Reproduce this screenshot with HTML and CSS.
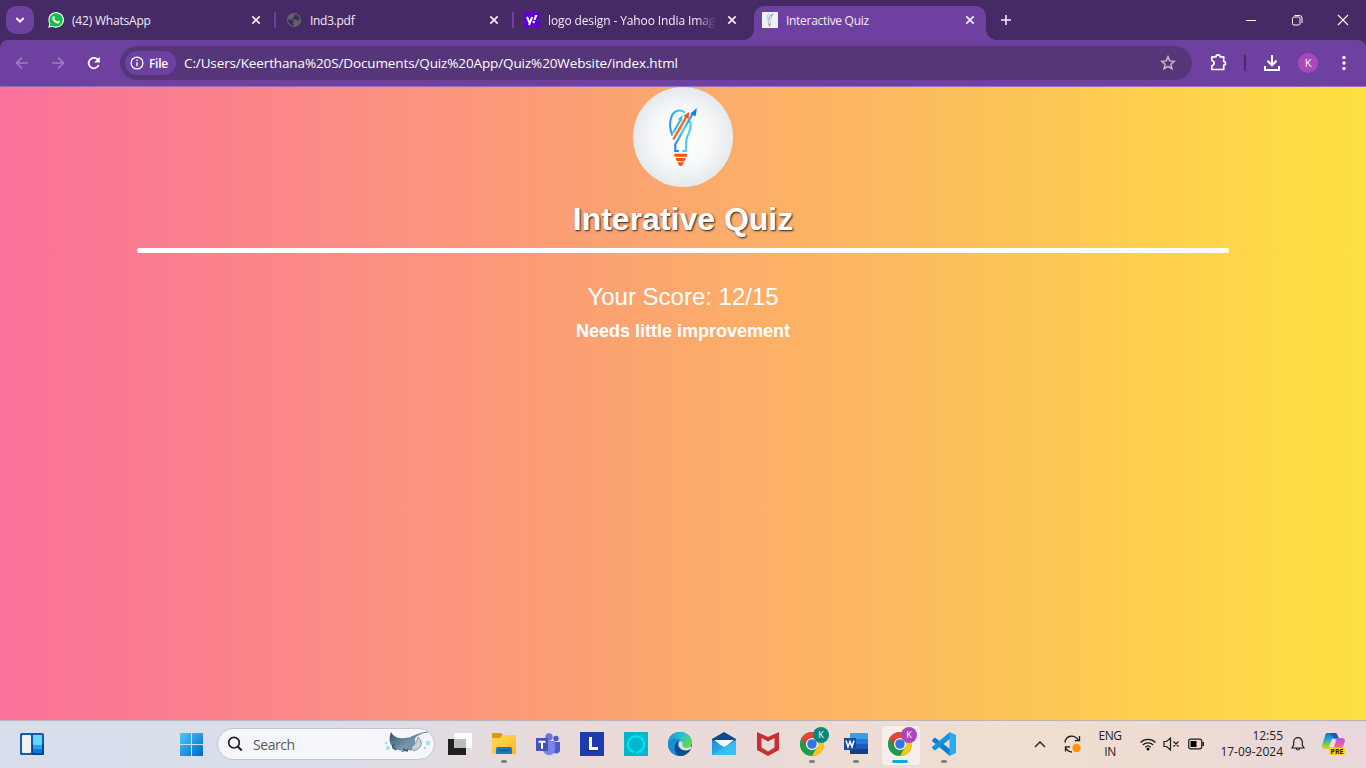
FILE: index.html
```html
<!DOCTYPE html>
<html lang="en">
<head>
<meta charset="utf-8">
<title>Interactive Quiz</title>
<link rel="stylesheet" href="styles.css">
</head>
<body>
<svg width="0" height="0" class="defs">
  <defs>
    <linearGradient id="gStart" x1="0" y1="0" x2="1" y2="1"><stop offset="0" stop-color="#4cc8f8"/><stop offset="1" stop-color="#0067c8"/></linearGradient>
    <linearGradient id="gFolder" x1="0" y1="0" x2="1" y2="1"><stop offset="0" stop-color="#ffdc60"/><stop offset="1" stop-color="#fbb812"/></linearGradient>
    <linearGradient id="gEdge" x1="0" y1="0" x2="1" y2=".5"><stop offset="0" stop-color="#1590d4"/><stop offset=".55" stop-color="#2bc0d0"/><stop offset="1" stop-color="#62db52"/></linearGradient>
    <linearGradient id="gMail" x1="0" y1="0" x2="1" y2="1"><stop offset="0" stop-color="#1b8ee0"/><stop offset="1" stop-color="#30c4f4"/></linearGradient>
    <linearGradient id="gRay" x1="0" y1="0" x2="1" y2="1"><stop offset="0" stop-color="#34506b"/><stop offset=".6" stop-color="#7898ab"/><stop offset="1" stop-color="#52708a"/></linearGradient>
    <linearGradient id="gCopA" x1="0" y1="0" x2="0" y2="1"><stop offset="0" stop-color="#1769df"/><stop offset=".4" stop-color="#20a9c9"/><stop offset=".7" stop-color="#84c94c"/><stop offset="1" stop-color="#f4c624"/></linearGradient>
    <linearGradient id="gCopB" x1="0" y1="0" x2="0" y2="1"><stop offset="0" stop-color="#a064e8"/><stop offset=".5" stop-color="#e55cae"/><stop offset="1" stop-color="#ff8b49"/></linearGradient>
    <linearGradient id="gBulb" x1="0" y1="0" x2="1" y2="0"><stop offset="0" stop-color="#2e96fb"/><stop offset="1" stop-color="#4cd9f8"/></linearGradient>
    <linearGradient id="gRod" gradientUnits="userSpaceOnUse" x1="42" y1="58" x2="62" y2="24"><stop offset="0" stop-color="#2588fa"/><stop offset=".45" stop-color="#48ccfa"/><stop offset="1" stop-color="#1c77ef"/></linearGradient>
    <radialGradient id="gDisc"><stop offset="0" stop-color="#fff"/><stop offset=".55" stop-color="#f8f9fa"/><stop offset="1" stop-color="#e5eaed"/></radialGradient>
    <symbol id="x" viewBox="0 0 16 16"><path d="M4.3 4.3l7.4 7.4M11.700 4.300l-7.400 7.400" stroke="#f2edf8" stroke-width="1.700" fill="none"/></symbol>
    <symbol id="bulb" viewBox="0 0 100 100">
      <g fill="none">
        <path d="M52 25.500c-5-4-11-2-13.500 4-2.500 7-1.500 13 .8 19" stroke="url(#gBulb)" stroke-width="2"/>
        <path d="M57.200 34c1.500 7-.5 11-2.700 15-1.800 4-1.500 8-1.500 15h-3.700" stroke="#45cffa" stroke-width="2.200"/>
        <path d="M45.800 64h-3.500v-6.500L60 26" stroke="url(#gRod)" stroke-width="2.200"/>
        <path d="M40 46l7.500-13" stroke="#3cb3f8" stroke-width="2.200"/>
        <path d="M40.300 52.500L53.500 29.500" stroke="#ff661c" stroke-width="2.500"/>
      </g>
      <path d="M44.800 32l4.900-3.700-.8 6z" fill="#3ab8f5"/>
      <path d="M50.500 29l5.800-4-.8 7z" fill="#f4570b"/>
      <path d="M57.500 26.500l6.500-5.500-1.500 8.500z" fill="#1c77ef"/>
      <path d="M41.300 66.700H54v3H41.300zM42.500 71h10.300l-1.300 3.200h-7.700zM44.300 75.300h6.700l-1.700 3-1.700 1-1.700-1z" fill="#fa5310"/>
    </symbol>
    <symbol id="chrome" viewBox="0 0 24 24">
      <circle cx="12" cy="12" r="12" fill="#229b49"/>
      <path d="M12 12L1.600 6A12 12 0 0 1 22.400 6z" fill="#ea4435"/>
      <path d="M12 6h10.400A12 12 0 0 1 12 24l5.200-9z" fill="#fcc31d"/>
      <path d="M1.600 6l5.200 9L12 12V6z" fill="#e23d30"/>
      <path d="M1.600 6l5.200 9 5.200 3-3.300 5.500A12 12 0 0 1 1.600 6z" fill="#229b49"/>
      <circle cx="12" cy="12" r="6" fill="#fff"/><circle cx="12" cy="12" r="4.800" fill="#3275eb"/>
    </symbol>
  </defs>
</svg>

<div class="screen">
  <header class="tabstrip">
    <div class="tabsearch"><svg width="28" height="28"><path d="M10.300 12l3.700 3.700 3.700-3.700" fill="none" stroke="#fff" stroke-width="2"/></svg></div>
    <div class="tab">
      <svg width="16" height="16" viewBox="0 0 16 16"><path d="M.3 15.700l1-4.100A7.800 7.800 0 1 1 4.400 14.700z" fill="#fff"/><path d="M1.500 14.500l.9-3A6.700 6.700 0 1 1 4.700 13.700z" fill="#0cc143"/><path d="M5.200 4.200c.7-.6 1.200 0 1.700 1.400.2.500-.7.900-.5 1.200.7 1.400 1.700 2.200 3 2.700.4.100.8-1 1.200-.9 1.700.8 1.500.8 1.200 1.700-.4 1-1.700 1.400-2.600 1.200C6.500 11 4.400 8.500 4.200 6.500c0-1 .4-1.800 1-2.300z" fill="#fff"/></svg>
      <span class="title t1">(42) WhatsApp</span><svg class="close" width="16" height="16"><use href="#x"/></svg>
    </div>
    <i class="sep"></i>
    <div class="tab">
      <svg width="16" height="16" viewBox="0 0 16 16"><circle cx="8" cy="8" r="7" fill="#626366"/><path d="M2 7.500h3.500l2.500 1.700-1 1.500 1 3c-3 .2-5.800-2-6-6.200zM8.500 2.500c3 0 4.700 1.500 5.200 4.500l-1.700 1.700-2.500-1.200H7L6.500 5.500l2-.5z" fill="#412a60"/></svg>
      <span class="title t2">Ind3.pdf</span><svg class="close" width="16" height="16"><use href="#x"/></svg>
    </div>
    <i class="sep"></i>
    <div class="tab">
      <svg width="16" height="16"><path d="M0 0h16v16H0z" fill="#6001d2"/><path d="M3 5l2.400 5.300M8.200 5L5 13" stroke="#fff" stroke-width="2"/><path d="M11 3h2.600l-2.300 5H9.500z" fill="#fff"/><circle cx="9.700" cy="10" r="1.200" fill="#fff"/></svg>
      <span class="title t3">logo design - Yahoo India Images</span><svg class="close" width="16" height="16"><use href="#x"/></svg>
    </div>
    <i class="sep hidden"></i>
    <div class="tab active">
      <svg width="16" height="16"><path d="M0 0h16v16H0z" fill="#edf2f5"/><svg x="-3" y="-3" width="22" height="22"><use href="#bulb"/></svg></svg>
      <span class="title t4">Interactive Quiz</span><svg class="close" width="16" height="16"><use href="#x"/></svg>
    </div>
    <svg class="plus" width="16" height="16"><path d="M8 3v10M3 8h10" stroke="#f2edf8" stroke-width="1.600"/></svg>
    <div class="winbtns">
      <svg width="46" height="40"><path d="M18 20.500h10" stroke="#fff"/></svg>
      <svg width="46" height="40"><rect x="18.500" y="17" width="7.500" height="8" rx="1.500" fill="none" stroke="#fff"/><path d="M20.500 15.500h5q2.500 0 2.500 2.500v5" fill="none" stroke="#fff"/></svg>
      <svg width="46" height="40"><path d="M18 15l10 10M28 15L18 25" stroke="#fff" stroke-width="1.100"/></svg>
    </div>
  </header>

  <div class="toolbar">
    <svg class="nav" width="108" height="46"><g fill="none" stroke="#9d7fc0" stroke-width="1.700"><path d="M28 23H17M22 17.500L16.500 23l5.500 5.500M52 23h11M58 17.500l5.500 5.500-5.500 5.500"/></g><path d="M97.800 19.700A5.200 5.200 0 1 0 98.700 25" fill="none" stroke="#fff" stroke-width="1.800"/><path d="M99.800 16.800v5.700h-5.700z" fill="#fff"/></svg>
    <div class="omnibox">
      <div class="chip"><svg width="14" height="14"><circle cx="7" cy="7" r="5.900" fill="none" stroke="#fff" stroke-width="1.300"/><path d="M7 6.200v4M7 3.600v1.500" stroke="#fff" stroke-width="1.400"/></svg><span>File</span></div>
      <span class="url">C:/Users/Keerthana%20S/Documents/Quiz%20App/Quiz%20Website/index.html</span>
      <svg class="star" width="16" height="16" viewBox="0 0 16 16"><path d="M8 1.800l1.800 4.100 4.500.4-3.400 3 1 4.400L8 11.400l-3.900 2.300 1-4.400-3.400-3 4.500-.4z" fill="none" stroke="#c5bdce" stroke-width="1.500"/></svg>
    </div>
    <svg class="tools" width="174" height="46"><path d="M19.800 16.800h4.200c0-2.600 4-2.600 4 0h3.700v4.700c2.400 0 2.400 3.500 0 3.500v4.500H19.800v-3.700c3.200-.8 3.200-4.600 0-5.300z" fill="none" stroke="#fff" stroke-width="1.700" stroke-linejoin="round"/><path d="M52 15h2v16h-2z" fill="#4a2b69"/><path d="M80 15v10M75.500 20.800L80 25.300l4.500-4.500M73 26v4h14v-4" fill="none" stroke="#fff" stroke-width="2"/><circle cx="116" cy="23" r="10" fill="#ab47bc"/><text x="116" y="27" text-anchor="middle" class="avatar">K</text><g fill="#fff"><circle cx="152" cy="17.500" r="1.700"/><circle cx="152" cy="23" r="1.700"/><circle cx="152" cy="28.500" r="1.700"/></g></svg>
  </div>

  <main class="page">
    <svg class="logo" width="100" height="100"><circle cx="50" cy="50" r="50" fill="url(#gDisc)"/><use href="#bulb" width="100" height="100"/></svg>
    <h1>Interative Quiz</h1>
    <div class="rule"></div>
    <p class="score">Your Score: 12/15</p>
    <p class="remark">Needs little improvement</p>
  </main>

  <footer class="taskbar">
    <svg class="widgets" width="24" height="22"><rect width="24" height="22" rx="1.500" fill="#0d5cae"/><path d="M12 11h12v11H12z" fill="#0a4184"/><rect x="2" y="2" width="9" height="18" rx="1" fill="#f2f2f2"/><path d="M13 2h9v10h-9z" fill="#66d6ff"/><path d="M13 12h9v4h-9z" fill="#1da4f5"/><path d="M13 16h9v4h-9z" fill="#0879df"/></svg>
    <svg class="start" width="23" height="23"><path d="M0 0h11v11H0zM12 0h11v11H12zM0 12h11v11H0zM12 12h11v11H12z" fill="url(#gStart)"/></svg>
    <div class="search">
      <svg width="16" height="16"><circle cx="7" cy="6.700" r="5.300" fill="none" stroke="#202020" stroke-width="1.700"/><path d="M10.800 10.500l4 4" stroke="#202020" stroke-width="2"/></svg>
      <span>Search</span>
      <svg class="ray" width="50" height="26"><path d="M9 1c2 4 7 7 13 6 5 0 8-1 11-3 3-1 5-1 7 0-5 0-6 2-7 4 1 5-1 9-4 12-2-2-5-2-6 0-2 2-4 1-6-1-4 1-6-2-7-4C7 12 7 6 9 1z" fill="url(#gRay)"/><path d="M36 6c5 4 5 11-4 14-1-3-3-3-5-2 5-3 8-7 9-12z" fill="#c6d1dc" stroke="#72899a" stroke-width=".8"/><path d="M29 6c7-1 8-5 17-5" stroke="#71889b" stroke-width="1.200" fill="none"/><path d="M13 14c-3 0-3 3 0 4l1 1M21 18l4 2 1-2" stroke="#3e5873" stroke-width="1.600" fill="none"/><path d="M15 18l2 2 3-1-1 3-3-1z" fill="#f3f5f6"/><g fill="#8ddcf1" opacity=".85"><circle cx="6" cy="17" r="2"/><circle cx="4" cy="12" r="1.300"/><circle cx="46" cy="12" r="2.200"/><circle cx="43" cy="17" r="1.200"/></g></svg>
    </div>
    <div class="apps">
      <div class="app"><svg width="24" height="24"><path d="M0 7h18v16H0z" fill="#202020"/><path d="M6 1h18v15H6z" fill="#fff" opacity=".9"/><path d="M6 7h12v9H6z" fill="#bcbcbc"/></svg></div>
      <div class="app"><svg width="24" height="24"><path d="M0 2q0-1 1-1h8q1 0 1.500 2l-2 3H0z" fill="#dc9b08"/><path d="M0 6h8l3-3h12q1 0 1 1v18H0z" fill="url(#gFolder)"/><path d="M4 22v-5q0-2 2-2h12q2 0 2 2v5z" fill="#127abd"/><path d="M7 18.500h10" stroke="#075e98" stroke-width="1.500"/></svg><i class="dot"></i></div>
      <div class="app"><svg width="24" height="24"><circle cx="13" cy="5" r="3.700" fill="#6b73dc"/><circle cx="20" cy="6.500" r="2.700" fill="#5059c9"/><path d="M17 10h7v8c0 3-3 4-6 3z" fill="#5059c9"/><path d="M7 9h12v8c0 8-11 8-12 1z" fill="#7b83eb"/><path d="M0 6h12v13H0z" fill="#4651b9"/><path d="M2.500 8.800h7v2H7v6H5v-6H2.500z" fill="#fff"/></svg></div>
      <div class="app"><svg width="24" height="24"><path d="M0 0h24v24H0z" fill="#1d3bae"/><path d="M7 18l2-2h9v3H7z" fill="#182d63"/><path d="M9 5h3v10h6v3H9z" fill="#fff"/></svg></div>
      <div class="app"><svg width="24" height="24"><path d="M0 0h24v24H0z" fill="#00b8ca"/><path d="M9.500 20a8.100 8.100 0 1 1 5 0l-2.500.6" fill="none" stroke="#05e0f8" stroke-width="1.900"/></svg></div>
      <div class="app"><svg width="24" height="24"><circle cx="12" cy="12" r="12" fill="#1264b5"/><path d="M0 12C0 4 5 0 12 0c8 0 12 6 12 10 0 6-7 8-10 6-2-1 1-2 0-5C12 6 3 5 0 12z" fill="url(#gEdge)"/><path d="M0 12c1-6 9-8 13-3-5-1-8 5-5 9 2 4 6 6 8 5C8 26 0 20 0 12z" fill="#178fd8"/><path d="M11 9c-4 3 0 10 6 10 3 0 5-1 6-3-2 4-5 8-11 8C5 22 5 12 11 9z" fill="#0b4f91"/><path d="M12 9c4 1 2 4 3 6 2 2 6 1 8-1l.5 2c-3 4-12 3-13-3 0-2 0-3 1.500-4z" fill="#eadfdd"/></svg></div>
      <div class="app"><svg width="24" height="24"><path d="M0 7L12 0l12 7v5H0z" fill="#0a4d93"/><path d="M2 8h20L12 16z" fill="#f5f8fa"/><path d="M0 8l12 7 12-7v15H0z" fill="url(#gMail)"/><path d="M0 23l24-15v15z" fill="#40c9f4" opacity=".55"/></svg></div>
      <div class="app"><svg width="24" height="24"><path d="M1 0l11 5L23 0v18l-11 6-11-6zm4.500 6v9.500l6.500 4 6.500-4V6L12 9.500z" fill="#c53034" fill-rule="evenodd"/></svg></div>
      <div class="app"><svg width="24" height="24"><use href="#chrome"/></svg><b class="badge green">K</b><i class="dot"></i></div>
      <div class="app"><svg width="24" height="24"><path d="M6 1h18v6H6z" fill="#3e9be5"/><path d="M6 7h18v5H6z" fill="#2778cf"/><path d="M6 12h18v5H6z" fill="#185abd"/><path d="M6 17h18v5H6z" fill="#123e82"/><path d="M0 6h12v12H0z" fill="#1748a3"/><path d="M2 8.500l2 6.500 2-5.500 2 5.500 2-6.500" stroke="#fff" stroke-width="1.500" fill="none"/></svg><i class="dot"></i></div>
      <div class="app current"><svg width="24" height="24"><use href="#chrome"/></svg><b class="badge purple">K</b><i class="dot wide"></i></div>
      <div class="app"><svg width="24" height="24"><path d="M0 8l3-2.500L18 17v7L0 9z" fill="#0880ce"/><path d="M0 16l3 2.500L18 7V0L0 15z" fill="#1293dc"/><path d="M17.500 0L24 3v18l-6.500 3z" fill="#29aaf2"/></svg><i class="dot"></i></div>
    </div>
    <div class="tray">
      <svg class="trayleft" width="52" height="48"><g fill="none" stroke="#1d1d1d" stroke-width="1.300"><path d="M2 27l5-5 5 5"/><path d="M32 22.500C33 14.500 42 14.500 45.500 20.500M46.500 16v4.700h-4.700M32.500 31.500v-4.700h4.700M32.500 27.500c1.500 3 3.500 4.500 6.500 4.500"/></g><circle cx="43.500" cy="28" r="4.200" fill="#ff920b"/></svg>
      <div class="lang">ENG<br>IN</div>
      <svg class="status" width="66" height="48"><g fill="none" stroke="#1d1d1d" stroke-width="1.200"><path d="M.5 22.500a10.700 10.700 0 0 1 15 0M2.800 25a7.400 7.400 0 0 1 10.400 0M5.200 27.300a4.100 4.100 0 0 1 5.600 0"/><path d="M24 21.500h2.500l4-3.500v12l-4-3.500H24zM33.500 21.500l5 5M38.500 21.500l-5 5"/><rect x="48.700" y="19.200" width="13" height="9.600" rx="2"/><path d="M63.200 22v4" stroke-width="1.600"/></g><circle cx="8" cy="29" r="1.500"/><path d="M50.500 21h6v6h-6z"/></svg>
      <div class="clock"><span>12:55</span><br>17-09-2024</div>
      <svg class="bell" width="14" height="16"><path d="M1 12h12l-1.700-3V6a4.300 4.300 0 0 0-8.600 0v3zM5 12.500q2 3 4 0" fill="none" stroke="#1d1d1d" stroke-width="1.200"/></svg>
      <svg class="copilot" width="24" height="24"><path d="M5 1h8c3 0 2 4 4 5h-4L9 17H3c-4 0-3-4-2-7l2-6c.4-2 1-3 2-3z" fill="url(#gCopA)"/><path d="M11 7l2-1h7c4 0 3 4 2 6l-2 6h-9l3-9c-1 0-2 0-3-2z" fill="url(#gCopB)"/><path d="M10 7h4l-3 8H7z" fill="#efdfdc"/><path d="M8 1h5c3 0 2 4 4 5h-5z" fill="#1556c9"/><rect x="7" y="15.500" width="16" height="7.500" rx="2" fill="#ffce17"/><text x="15" y="21.600" text-anchor="middle" class="pre">PRE</text></svg>
    </div>
  </footer>
</div>
</body>
</html>
```
FILE: styles.css
```css
* { box-sizing: border-box; }
body { margin: 0; overflow: hidden; font-family: "Open Sans", sans-serif; }
svg { display: block; flex: none; }
.defs { position: absolute; }
.screen { width: 1366px; height: 768px; display: flex; flex-direction: column; background: #462a65; }

.tabstrip { height: 40px; display: flex; align-items: center; padding-left: 6px; color: #f1ebf7; }
.tabsearch { width: 28px; height: 28px; border-radius: 10px; background: #6e41a1; margin-right: 6px; }
.tab { width: 232px; height: 28px; display: flex; align-items: center; padding: 0 8px; gap: 8px; }
.title { flex: 1; min-width: 0; font-size: 12px; white-space: nowrap; overflow: hidden; letter-spacing: -.3px; }
.t1 { letter-spacing: -.2px; }
.t3 { letter-spacing: -.12px; margin-right: -6px; -webkit-mask-image: linear-gradient(to right, #000 148px, transparent 168px); mask-image: linear-gradient(to right, #000 148px, transparent 168px); }
.sep { width: 2px; height: 16px; margin: 0 2px; background: #6e41a1; }
.sep.hidden { background: none; }
.active { position: relative; height: 34px; align-self: flex-end; background: #6e41a1; border-radius: 10px 10px 0 0; padding-bottom: 6px; }
.active::before, .active::after { content: ""; position: absolute; bottom: 0; width: 10px; height: 10px; }
.active::before { left: -10px; background: radial-gradient(circle at 0 0, transparent 9.500px, #6e41a1 10px); }
.active::after { right: -10px; background: radial-gradient(circle at 100% 0, transparent 9.500px, #6e41a1 10px); }
.plus { margin-left: 12px; }
.winbtns { display: flex; margin-left: auto; }

.toolbar { height: 47px; display: flex; background: #6e41a1; border-radius: 8px 8px 0 0; border-bottom: 1px solid #9270bd; }
.omnibox { width: 1072px; height: 34px; margin: 6px 0 0 12px; padding: 0 16px 0 5px; border-radius: 17px; background: #563679; display: flex; align-items: center; color: #fff; }
.chip { width: 51px; height: 24px; border-radius: 12px; background: #6e41a1; display: flex; align-items: center; padding-left: 5px; gap: 5px; font-size: 12px; font-weight: 600; letter-spacing: -.3px; }
.url { margin-left: 8px; font-size: 13.500px; letter-spacing: -.12px; white-space: nowrap; }
.star { margin-left: auto; }
.avatar { font: 11px "Open Sans", sans-serif; fill: #fff; }

.page { height: 633px; display: flex; flex-direction: column; align-items: center; background: linear-gradient(to right, #fa709a 0%, #fee140 100%); color: #fff; font-family: "Liberation Sans", Arial, sans-serif; }
h1 { margin: 13px 0 0; font-size: 32px; line-height: 38px; text-shadow: 1px 1px 2px #222; }
.rule { width: 1092px; height: 5px; margin-top: 10px; background: #fff; border-radius: 3px; }
.score { margin: 30px 0 0; font-size: 24px; line-height: 28px; }
.remark { margin: 9px 0 0; font-size: 18px; line-height: 22px; font-weight: bold; }

.taskbar { height: 48px; padding-bottom: 1px; border-top: 1px solid #b7b2bd; display: flex; align-items: center; background: linear-gradient(to right, #d8deeb 0%, #d9deea 22%, #e9dad9 42%, #eadad7 55%, #efdfd0 73%, #eedbd2 84%, #e8d8dc 100%); color: #202020; }
.widgets { margin-left: 20px; }
.start { margin-left: 136px; }
.search { width: 218px; height: 32px; margin: 0 0 0 14px; padding: 0 2px 0 9px; border: 1px solid #c3c5d0; border-radius: 16px; background: #f5f6fa; display: flex; align-items: center; font-size: 14px; color: #595959; }
.search span { margin-left: 10px; letter-spacing: -.45px; }
.ray { margin-left: auto; }
.apps { display: flex; margin-left: 3px; }
.app { position: relative; width: 44px; height: 46px; display: flex; align-items: center; justify-content: center; }
.dot { position: absolute; left: 19px; bottom: 4px; width: 6px; height: 3px; border-radius: 2px; background: #858080; }
.dot.wide { left: 14px; width: 16px; background: #00b3ce; }
.current { z-index: 0; }
.current::before { content: ""; position: absolute; z-index: -1; left: 3px; top: 4px; width: 38px; height: 39px; border-radius: 4px; background: #f7eeeb; border: 1px solid #e7dedb; }
.badge { position: absolute; left: 23px; top: 6px; width: 16px; height: 16px; border-radius: 8px; font-size: 9px; line-height: 16px; font-weight: 400; text-align: center; color: #fff; }
.green { background: #07887b; }
.purple { background: #ab47bc; }
.tray { display: flex; align-items: center; margin-left: auto; font-size: 12px; }
.lang { width: 30px; margin-left: 10px; text-align: center; line-height: 16px; letter-spacing: -.4px; }
.status { margin-left: 15px; }
.clock { width: 77px; text-align: right; line-height: 16px; letter-spacing: 0; white-space: nowrap; }
.bell { margin-left: 8px; }
.copilot { margin: 0 20px 0 17px; }
.pre { font: bold 7px "Open Sans", sans-serif; fill: #332600; }
```
